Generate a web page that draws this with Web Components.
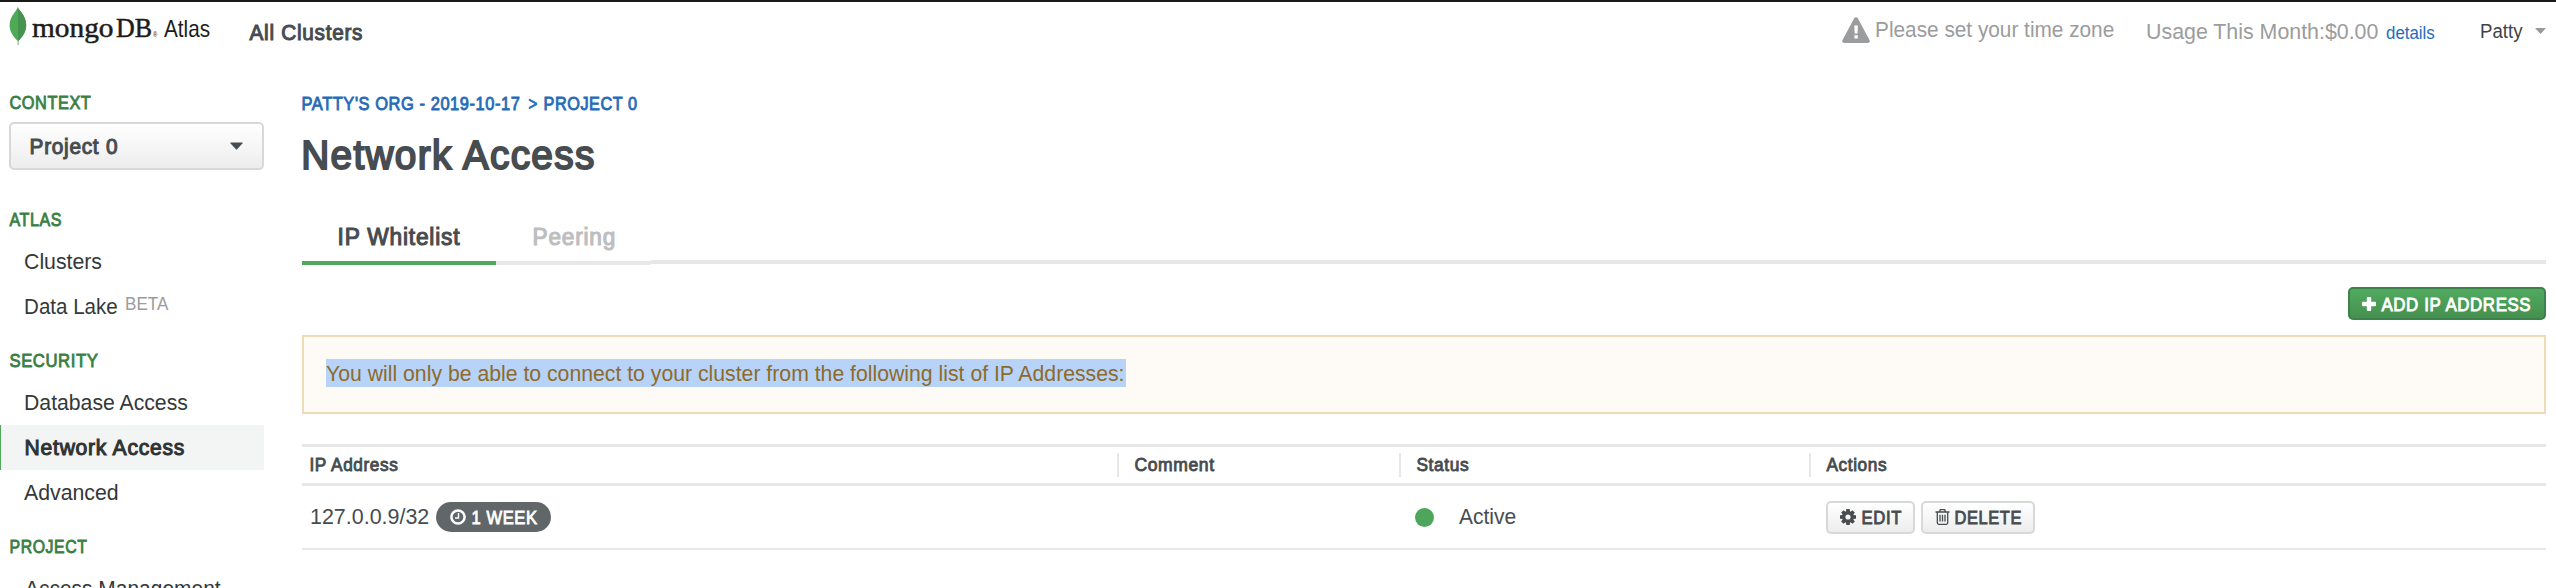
<!DOCTYPE html>
<html lang="en">
<head>
<meta charset="utf-8">
<title>Network Access</title>
<style>
html,body{margin:0;height:588px;overflow:hidden;background:#fff;font-family:"Liberation Sans",Arial,sans-serif;color:#464c4f}
</style>
</head>
<body>
<atlas-app></atlas-app>
<script>
const define = (name, html, setup) => {
  const tpl = document.createElement('template');
  tpl.innerHTML = html;
  customElements.define(name, class extends HTMLElement {
    connectedCallback() {
      if (this.shadowRoot) return;
      this.attachShadow({mode: 'open'}).append(tpl.content.cloneNode(true));
      if (setup) setup(this, this.shadowRoot);
    }
  });
};

/* One line of text whose ink spans exactly `w` pixels; `b` gives a medium weight. */
const pen = document.createElement('canvas').getContext('2d');
define('fit-text', `<style>
:host{display:block;flex:none;white-space:nowrap}
:host([b]) span{-webkit-text-stroke:.048em currentColor;letter-spacing:.035em}
span{display:inline-block;transform-origin:0 50%;white-space:nowrap}
</style><span><slot></slot></span>`, (el, root) => {
  const n = (a, d) => parseFloat(el.getAttribute(a) ?? d);
  const size = n('s', 22), w = n('w', 0), lh = n('lh', 30);
  const bold = el.hasAttribute('b');
  const edge = bold ? size * .024 : 0;
  const spacing = bold ? size * .035 * (el.textContent.length - 1) : 0;
  const family = el.hasAttribute('serif') ? '"Liberation Serif",serif' : '"Liberation Sans",Arial,sans-serif';
  pen.font = `${size}px ${family}`;
  const m = pen.measureText(el.textContent);
  const k = (w - 2 * edge) / (m.actualBoundingBoxRight + m.actualBoundingBoxLeft + spacing);
  el.style.cssText += `;width:${w}px;height:${lh}px;line-height:${lh}px;font:${size}px/${lh}px ${family}`;
  root.querySelector('span').style.transform = `translateX(${m.actualBoundingBoxLeft * k + edge}px) scaleX(${k})`;
});

define('brand-logo', `<style>
:host{display:flex;align-items:flex-start}
svg{display:block;margin:5px 5px 0 0}
fit-text{color:#1c1c1c}
</style>
<svg width="18" height="39" viewBox="0 0 18 39">
<path d="M8.3 31h1.3l.3 7h-1.3z" fill="#a9b0ab"/>
<path d="M8.8 0C9.4 2 11 3.500 12.500 5.400 15.600 9.400 17.200 13.600 17.200 18c0 6.800-3.500 11.800-8.200 16C4.400 30 .6 25 .6 18.300.6 13 2.700 9 5.700 5.200 7.300 3.200 8.300 2 8.800 0z" fill="#4faa57"/>
<path d="M8.800 0C9.400 2 11 3.500 12.500 5.400 15.600 9.400 17.200 13.600 17.200 18c0 6.800-3.500 11.800-8.200 16z" fill="#45934f"/>
</svg>
<fit-text serif s="27" w="81" lh="40" style="margin-top:6.400px;-webkit-text-stroke:.5px">mongo</fit-text>
<fit-text serif s="27" w="35" lh="40" style="margin:6.400px 0 0 3px;-webkit-text-stroke:.5px">DB</fit-text>
<fit-text s="7" w="5" lh="10" style="margin:28px 0 0 2px">®</fit-text>
<fit-text s="24" w="46" lh="40" style="margin:7px 0 0 6px">Atlas</fit-text>`);

define('top-bar', `<style>
:host{display:flex;align-items:flex-start;height:60px;box-sizing:border-box;border-top:2px solid #1a1a1a;padding:0 10px 0 9px}
.gap{flex:1}
.g{color:#9b9c9d}
svg{display:block;flex:none}
</style>
<brand-logo></brand-logo>
<fit-text b w="114" s="22" lh="40" style="margin:11px 0 0 39px">All Clusters</fit-text>
<div class="gap"></div>
<svg width="28" height="26" viewBox="0 0 28 26" style="margin:15px 6px 0 0"><path d="M12.200 1.200Q14-.9 15.800 1.200L27.600 23.200Q28.300 26 25.500 26H2.500Q-.3 26 .4 23.200z" fill="#9b9c9d"/><path d="M12.300 8.500h3.600l-.4 8h-2.800zM12.400 18.200h3.400v3.400h-3.400z" fill="#fff"/></svg>
<fit-text class="g" w="238" s="22" lh="40" style="margin-top:8px">Please set your time zone</fit-text>
<fit-text class="g" w="231.500" s="22" lh="40" style="margin:10px 0 0 33px">Usage This Month:$0.00</fit-text>
<fit-text w="49" s="17.500" lh="40" style="margin:11px 0 0 7px;color:#1f6cbf">details</fit-text>
<fit-text w="41.500" s="20" lh="40" style="margin:8.500px 0 0 46px;color:#3d4347">Patty</fit-text>
<svg width="11" height="6" viewBox="0 0 11 6" style="margin:26px 0 0 13px"><path d="M0 0h11L5.500 6z" fill="#999"/></svg>`);

define('nav-title', `<style>
:host{display:block;height:51px;box-sizing:border-box;padding:12.600px 0 0 9px;color:#3a7f45}
</style><div id="t"></div>`, (el, root) => {
  root.getElementById('t').innerHTML = `<fit-text b s="18.500" lh="38.400" w="${el.getAttribute('w')}">${el.textContent}</fit-text>`;
});

define('nav-item', `<style>
:host{display:flex;box-sizing:border-box;width:264px;height:45px;padding-left:25px;color:#333839}
:host([active]){background:#f3f5f4;border-left:1px solid #4fa95c;padding-left:23.500px;color:#2e3233}
</style><slot></slot>`);

define('project-select', `<style>
:host{display:flex;align-items:center;box-sizing:border-box;margin:0 0 18px 9px;width:255px;height:48px;border:2px solid #d5dad9;border-radius:5px;padding:0 19px;background:linear-gradient(#fff,#ededed);justify-content:space-between}
</style><fit-text b s="21.500" w="88" lh="46" style="margin-top:1px">Project 0</fit-text>
<svg width="13" height="8" viewBox="0 0 13 8"><path d="M1 .5h11q1 0 .4.900L7.100 7.200q-.6.600-1.200 0L.6 1.400Q0 .5 1 .5z" fill="#464c4f"/></svg>`);

define('side-nav', `<style>:host{display:block;padding-top:11px}</style>
<nav-title w="82">CONTEXT</nav-title>
<project-select></project-select>
<nav-title w="52.500">ATLAS</nav-title>
<nav-item><fit-text w="77" lh="45">Clusters</fit-text></nav-item>
<nav-item><fit-text w="92.500" lh="45">Data Lake</fit-text><fit-text w="43" s="18.500" lh="39" style="margin-left:8.500px;color:#9c9c9c">BETA</fit-text></nav-item>
<nav-title w="89">SECURITY</nav-title>
<nav-item><fit-text w="164" lh="45">Database Access</fit-text></nav-item>
<nav-item active><fit-text b w="161" lh="45">Network Access</fit-text></nav-item>
<nav-item style="padding-left:24px"><fit-text w="93.500" lh="45">Advanced</fit-text></nav-item>
<nav-title w="77" style="padding-left:10px">PROJECT</nav-title>
<nav-item><fit-text w="195.500" lh="45">Access Management</fit-text></nav-item>`);

define('tab-strip', `<style>
:host{display:flex;height:54px;margin-top:31px}
div{box-sizing:border-box;border-bottom:4px solid #e7e9e8;height:54px;padding-left:36.500px}
.a{width:194px;border-color:#4fa95c}
.b{width:155px;color:#bcbec0}
.r{flex:1;height:53px;border-color:#e7e7e7}
</style>
<div class="a"><fit-text b s="23" w="122" lh="52">IP Whitelist</fit-text></div>
<div class="b"><fit-text b s="23" w="82" lh="52">Peering</fit-text></div>
<div class="r"></div>`);

define('ui-button', `<style>
:host{display:flex;box-sizing:border-box;height:33px;border:2px solid #d5dad9;border-radius:5px;background:linear-gradient(#fff,#ededed);padding:0 12px;color:#464c4f;align-items:center;justify-content:space-between}
:host([primary]){border-color:#3c824a;background:linear-gradient(#50aa5e,#46904f);color:#fff}
</style><slot></slot>`);

define('alert-box', `<style>
:host{display:flex;align-items:flex-start;box-sizing:border-box;height:79px;margin-top:15px;border:2px solid #eedbb7;background:#fefbf6;padding:22px;color:#8e6a2a}
div{height:28px;width:800px;background:#b7d4f8}
</style><div><slot></slot></div>`);

define('ip-table', `<style>
:host{display:block;margin-top:30px}
.h,.row{display:grid;grid-template-columns:815px 282px 410px 1fr}
.h{border:solid #e7e7e7;border-width:3px 0;height:36px;align-items:center}
.h div{height:24px;border-left:2px solid #e7e7e7;display:flex;align-items:center;padding-left:14.500px}
.h div:first-child{border:0;padding-left:7.500px}
.row{height:62px;border-bottom:2px solid #e7e7e7;align-items:center}
.row>div{display:flex;align-items:center}
.badge{display:flex;align-items:center;box-sizing:border-box;width:115px;height:30px;border-radius:15px;background:#616668;color:#fff;margin-left:7px;padding-left:13.500px}
.dot{width:19px;height:19px;border-radius:50%;background:#4ea65c;margin-right:25px}
svg{display:block;flex:none}
</style>
<div class="h">
<div><fit-text b s="18" w="89.500">IP Address</fit-text></div>
<div><fit-text b s="18" w="80.500">Comment</fit-text></div>
<div><fit-text b s="18" w="53">Status</fit-text></div>
<div><fit-text b s="18" w="61">Actions</fit-text></div>
</div>
<div class="row">
<div style="padding-left:9px"><fit-text w="118">127.0.0.9/32</fit-text>
<span class="badge"><svg width="16" height="16" viewBox="0 0 16 16" fill="none" stroke="#fff"><circle cx="8" cy="8" r="6.600" stroke-width="2.500"/><path d="M8.500 4v5H5" stroke-width="1.400"/></svg><fit-text b s="18.500" w="66" style="margin:1px 0 0 6px">1 WEEK</fit-text></span></div>
<div></div>
<div style="padding-left:16px"><span class="dot"></span><fit-text w="57">Active</fit-text></div>
<div style="padding-left:17px;gap:6px">
<ui-button style="width:89px"><svg width="16" height="16" viewBox="0 0 16 16"><g fill="#464c4f"><path d="M6.300 0h3.400l.4 4H5.900zM5.900 12h4.200l-.4 4H6.300z"/><path d="M6.300 0h3.400l.4 4H5.900zM5.900 12h4.200l-.4 4H6.300z" transform="rotate(45 8 8)"/><path d="M6.300 0h3.400l.4 4H5.900zM5.900 12h4.200l-.4 4H6.300z" transform="rotate(90 8 8)"/><path d="M6.300 0h3.400l.4 4H5.900zM5.900 12h4.200l-.4 4H6.300z" transform="rotate(135 8 8)"/></g><circle cx="8" cy="8" r="4.300" fill="none" stroke="#464c4f" stroke-width="3.400"/></svg><fit-text b s="18.500" w="39.500" style="margin-top:2px">EDIT</fit-text></ui-button>
<ui-button style="width:114px"><svg width="15" height="16" viewBox="0 0 15 16" fill="none" stroke="#464c4f" stroke-width="1.300"><path d="M.5 3h14M4.500 3l.8-2.300h4.400L10.500 3M2.300 3v10.800q0 1.500 1.500 1.500h7.400q1.500 0 1.500-1.500V3M5 5.800v6.700M7.500 5.800v6.700M10 5.800v6.700"/></svg><fit-text b s="18.500" w="66.500" style="margin-top:2px">DELETE</fit-text></ui-button>
</div>
</div>`);

define('page-main', `<style>
:host{display:block;padding:29px 10px 0 0}
.bar{display:flex;justify-content:flex-end;margin-top:22px}
.crumbs{display:flex;color:#266bb8}
</style>
<div class="crumbs"><fit-text b s="18.500" w="218">PATTY'S ORG - 2019-10-17</fit-text><fit-text b s="18.500" w="9" style="margin-left:7.500px">&gt;</fit-text><fit-text b s="18.500" w="93.500" style="margin-left:7px">PROJECT 0</fit-text></div>
<fit-text b s="41" w="294" lh="50" style="margin:11px 0 0 1px">Network Access</fit-text>
<tab-strip></tab-strip>
<div class="bar"><ui-button primary style="width:198px"><svg width="14" height="14" viewBox="0 0 14 14" style="margin-bottom:-1px"><path d="M5.800 0h2.400q1 0 1 1v3.800H13q1 0 1 1v2.400q0 1-1 1H9.200V13q0 1-1 1H5.800q-1 0-1-1V9.200H1q-1 0-1-1V5.800q0-1 1-1h3.800V1q0-1 1-1z" fill="#fff"/></svg><fit-text b s="18.500" w="151" style="margin-top:2px">ADD IP ADDRESS</fit-text></ui-button></div>
<alert-box><fit-text w="799" s="22" lh="29">You will only be able to connect to your cluster from the following list of IP Addresses:</fit-text></alert-box>
<ip-table></ip-table>`);

define('atlas-app', `<style>
:host{display:block;height:588px;overflow:hidden}
.body{display:grid;grid-template-columns:302px 1fr}
</style><top-bar></top-bar><div class="body"><side-nav></side-nav><page-main></page-main></div>`);
</script>
</body>
</html>
